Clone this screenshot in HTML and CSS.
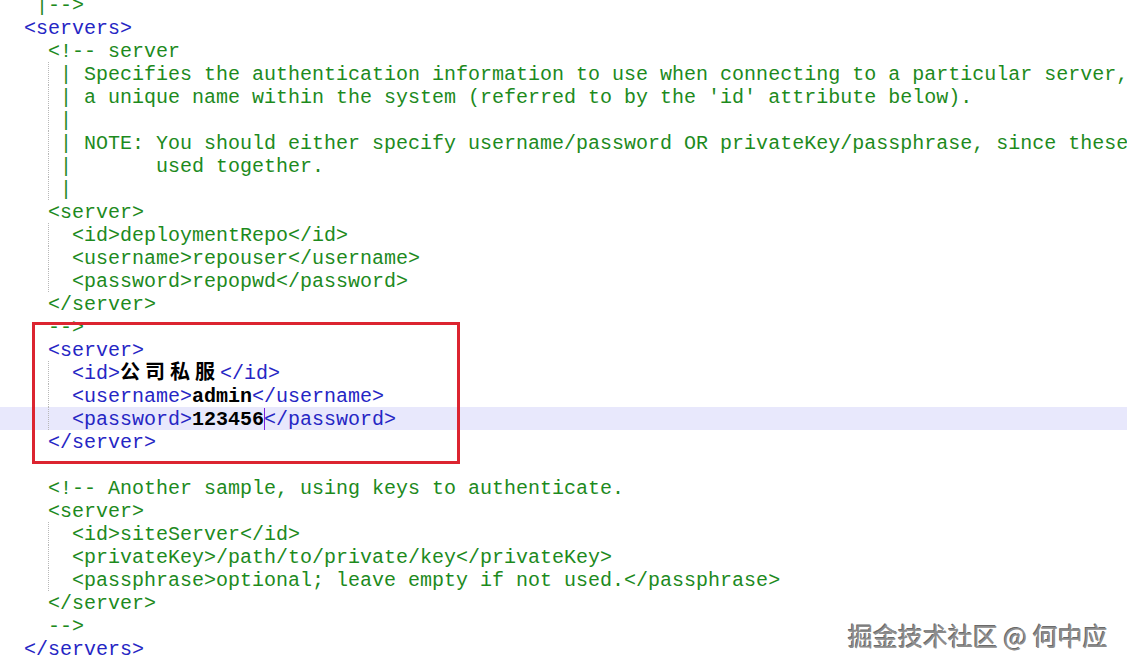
FILE: index.html
```html
<!DOCTYPE html>
<html lang="zh-CN">
<head>
    <meta charset="UTF-8">
    <meta name="viewport" content="width=device-width, initial-scale=1.0">
    <title>settings.xml - servers</title>
    <link rel="stylesheet" href="styles.css">
</head>
<body>
    <div class="editor">
        <div class="line">   |--&gt;</div>
        <div class="line tag">  &lt;servers&gt;</div>
        <div class="line">    &lt;!-- server</div>
        <div class="line guide">     | Specifies the authentication information to use when connecting to a particular server, identified by</div>
        <div class="line guide">     | a unique name within the system (referred to by the 'id' attribute below).</div>
        <div class="line guide">     |</div>
        <div class="line guide">     | NOTE: You should either specify username/password OR privateKey/passphrase, since these pairings are</div>
        <div class="line guide">     |       used together.</div>
        <div class="line guide">     |</div>
        <div class="line">    &lt;server&gt;</div>
        <div class="line guide">      &lt;id&gt;deploymentRepo&lt;/id&gt;</div>
        <div class="line guide">      &lt;username&gt;repouser&lt;/username&gt;</div>
        <div class="line guide">      &lt;password&gt;repopwd&lt;/password&gt;</div>
        <div class="line">    &lt;/server&gt;</div>
        <div class="line">    --&gt;</div>
        <div class="line tag">    &lt;server&gt;</div>
        <div class="line guide tag">      &lt;id&gt;<span class="value cjk">公司私服</span>&lt;/id&gt;</div>
        <div class="line guide tag">      &lt;username&gt;<span class="value">admin</span>&lt;/username&gt;</div>
        <div class="line guide tag current">      &lt;password&gt;<span class="value caret">123456</span>&lt;/password&gt;</div>
        <div class="line tag">    &lt;/server&gt;</div>
        <div class="line"> </div>
        <div class="line">    &lt;!-- Another sample, using keys to authenticate.</div>
        <div class="line">    &lt;server&gt;</div>
        <div class="line guide">      &lt;id&gt;siteServer&lt;/id&gt;</div>
        <div class="line guide">      &lt;privateKey&gt;/path/to/private/key&lt;/privateKey&gt;</div>
        <div class="line guide">      &lt;passphrase&gt;optional; leave empty if not used.&lt;/passphrase&gt;</div>
        <div class="line">    &lt;/server&gt;</div>
        <div class="line">    --&gt;</div>
        <div class="line tag">  &lt;/servers&gt;</div>

        <!-- рамка вокруг нового сервера -->
        <div class="mark"></div>
    </div>

    <div class="watermark">掘金技术社区 @ 何中应</div>
</body>
</html>
```

FILE: styles.css
```css
html, body {
    margin: 0;
    padding: 0;
    background-color: #fff;
    overflow: hidden;
}
body {
    width: 1127px;
    height: 671px;
    position: relative;
}
.editor {
    position: relative;
    margin-top: -7px;
    font-family: "Liberation Mono", "Courier New", monospace;
    font-size: 20px;
    color: #1d8a1d;
}
.line {
    height: 23px;
    line-height: 25px;
    white-space: pre;
    overflow: hidden;
}
.guide {
    background-image: repeating-linear-gradient(to bottom, #b8b8b8 0 1px, transparent 1px 2px);
    background-size: 1px 100%;
    background-position: 48px 0;
    background-repeat: no-repeat;
}
.tag {
    color: #2626c4;
}
.current {
    background-color: #e8e8fc;
}
.value {
    color: #000;
    font-weight: bold;
}
.cjk {
    font-family: "Noto Sans CJK SC", sans-serif;
    font-size: 20px;
    line-height: 16px;
    letter-spacing: 5px;
}
.caret {
    border-right: 1px solid #7a1fe0;
    margin-right: -1px;
}
.mark {
    position: absolute;
    left: 32px;
    top: 329px;
    width: 428px;
    height: 142px;
    box-sizing: border-box;
    border: 3px solid #dc2430;
}
.watermark {
    position: absolute;
    left: 848px;
    top: 619px;
    font-family: "Noto Sans CJK SC", sans-serif;
    font-size: 25px;
    line-height: 32px;
    color: #8c8c8c;
    text-shadow: 1px 1px 0 #fff, -1px -1px 0 #6a6a6a;
    white-space: pre;
}
```
